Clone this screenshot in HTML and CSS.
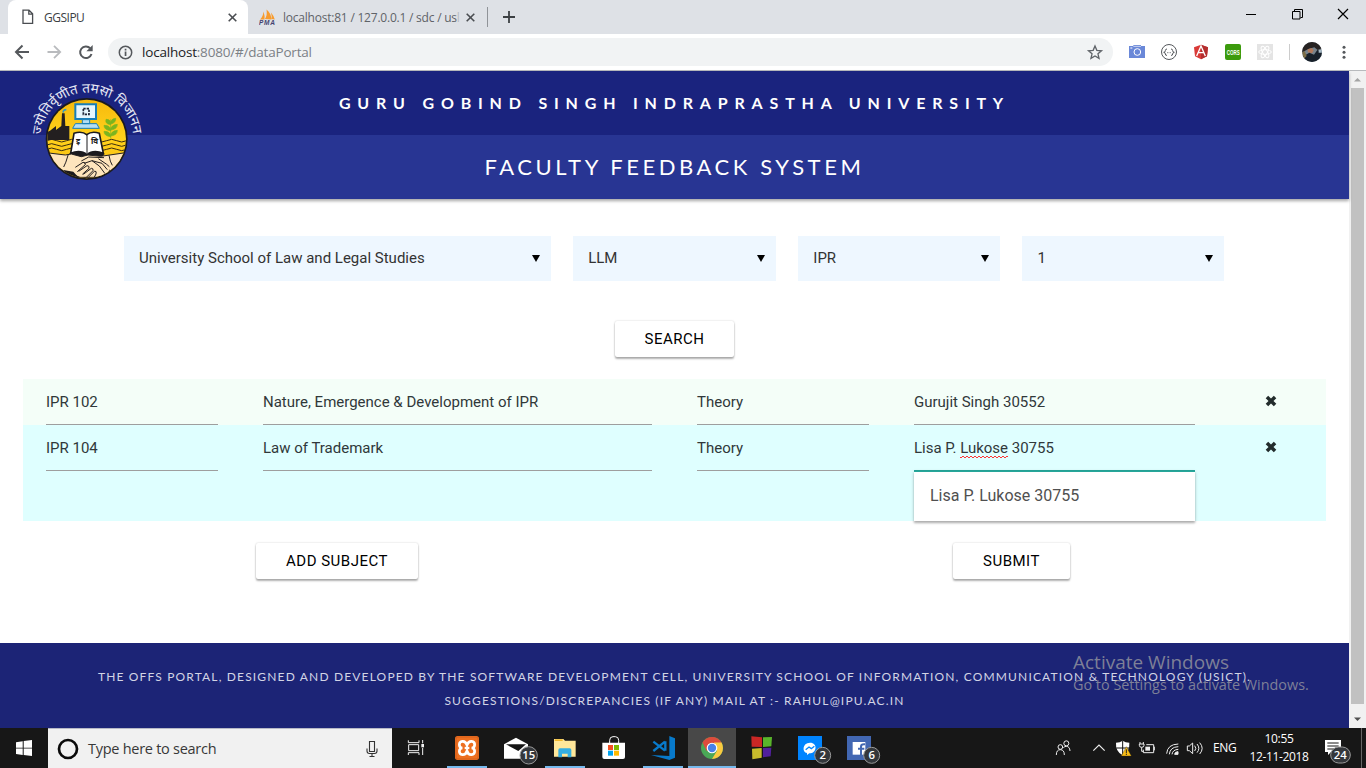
FILE: index.html
```html
<!DOCTYPE html>
<html lang="en">
<head>
<meta charset="utf-8">
<title>GGSIPU</title>
<link rel="stylesheet" href="styles.css">
</head>
<body>
<div class="tabs">
  <div class="tab active">
    <svg class="doc" width="12" height="16" viewBox="0 0 12 16" fill="none" stroke="#4a4d51" stroke-width="1.3"><path d="M1 1.2h6l3.6 3.6v9.6H1zM6.8 1.2v3.9h3.8"/></svg>
    <span class="tab-title t1">GGSIPU</span>
    <svg class="close" width="9" height="9" viewBox="0 0 9 9" stroke="#4a4d51" stroke-width="1.6"><path d="M.7.7l7.6 7.6M8.3.7L.7 8.3"/></svg>
  </div>
  <div class="tab second">
    <svg width="17" height="17" viewBox="0 0 17 17"><path d="M1 10.5Q4 8 4.500 2.500Q6 7 5.500 10.500zM6 10Q8.500 6 7.500 .5Q12 4 12.500 10.500zM12.500 10Q13 7 12 3.500Q15 7 15.800 10.500z" fill="#f89c2e"/><text x="0" y="16.400" class="pma" textLength="16">PMA</text></svg>
    <span class="tab-title t2">localhost:81 / 127.0.0.1 / sdc / us</span><span class="tab-title fade">l</span>
    <svg class="close" width="9" height="9" viewBox="0 0 9 9" stroke="#4a4d51" stroke-width="1.6"><path d="M.7.7l7.600 7.600M8.300.7L.7 8.300"/></svg>
  </div>
  <i class="tab-sep"></i>
  <svg class="plus" width="12" height="12" viewBox="0 0 12 12" stroke="#3c4043" stroke-width="1.800"><path d="M6 0v12M0 6h12"/></svg>
  <div class="winctl">
    <svg width="46" height="34" viewBox="0 0 46 34" stroke="#000" fill="none"><path d="M18 14.500h10"/></svg>
    <svg width="46" height="34" viewBox="0 0 46 34" stroke="#000" fill="none"><path d="M18.500 11.500h7.500v7.500h-7.500zM20.500 11v-1.500h8v8H26.500"/></svg>
    <svg width="46" height="34" viewBox="0 0 46 34" stroke="#000" stroke-width="1.200" fill="none"><path d="M18 9l10 10M28 9L18 19"/></svg>
  </div>
</div>
<div class="toolbar">
  <svg width="32" height="36" viewBox="0 0 32 36" fill="none" stroke="#55585c" stroke-width="2"><path d="M23 18H10.500M16.500 11.500L10 18l6.500 6.500"/></svg>
  <svg width="32" height="36" viewBox="0 0 32 36" fill="none" stroke="#b9bbbe" stroke-width="1.800"><path d="M9.500 18h12M16 11.800l6.200 6.200-6.200 6.200"/></svg>
  <svg width="32" height="36" viewBox="0 0 32 36" fill="none" stroke="#55585c" stroke-width="2"><path d="M20.200 14.300A5.800 5.800 0 1 0 21.500 20"/><path d="M22.700 11v6.300h-6.300z" fill="#55585c" stroke="none"/></svg>
  <div class="omni">
    <svg width="15" height="15" viewBox="0 0 15 15"><circle cx="7.500" cy="7.500" r="6.200" fill="none" stroke="#55585c" stroke-width="1.500"/><path d="M6.700 6.500h1.700v4.500H6.700zM6.700 3.700h1.700v1.700H6.700z" fill="#55585c"/></svg>
    <span class="url"><b>localhost</b>:8080/#/dataPortal</span>
    <svg class="star" width="32" height="28" viewBox="27 114 96 84"><path d="M75 138l5.500 13 14 1.200-10.600 9.200 3.200 13.600L75 167.800 62.900 175l3.200-13.600-10.600-9.200 14-1.200z" fill="none" stroke="#5f6368" stroke-width="4"/></svg>
  </div>
  <svg width="32" height="36" viewBox="153 102 96 108"><path d="M177 138h13v-3h23v3h12v36h-48z" fill="#6a88d8"/><circle cx="202" cy="156" r="10" fill="none" stroke="#fff" stroke-width="3"/><path d="M181 144h6" stroke="#fff" stroke-width="3"/><path d="M190 139h23" stroke="#fff" stroke-width="2"/></svg>
  <svg width="32" height="36" viewBox="249 102 96 108" fill="none" stroke="#55585c"><circle cx="297" cy="156" r="22.500" stroke-width="3"/><path d="M291 147q-5 0-5 5t-5 5q5 0 5 5t5 4M303 147q5 0 5 5t5 5q-5 0-5 5t-5 4" stroke-width="3"/><path d="M292 158h10" stroke-width="3" stroke-dasharray="2 2"/></svg>
  <svg width="32" height="36" viewBox="345 102 96 108"><path d="M393 134l21 8-3 27-18 9-18-9-3-27z" fill="#d93a37"/><path d="M393 134l21 8-3 27-18 9z" fill="#b32e2e"/><path d="M380 168l13-30 13 30M385 158h16" fill="none" stroke="#fff" stroke-width="4"/></svg>
  <svg width="32" height="36" viewBox="441 102 96 108"><rect x="465" y="132" width="48" height="48" rx="6" fill="#3c9b0d"/><text x="470" y="164" class="cors" textLength="39" lengthAdjust="spacingAndGlyphs">CORS</text></svg>
  <svg width="32" height="36" viewBox="537 102 96 108"><path fill="#e4e4e4" d="M561 132h48v48h-48z"/><g fill="none" stroke="#fff" stroke-width="3"><ellipse cx="585" cy="156" rx="19" ry="7"/><ellipse cx="585" cy="156" rx="19" ry="7" transform="rotate(60 585 156)"/><ellipse cx="585" cy="156" rx="19" ry="7" transform="rotate(120 585 156)"/></g></svg>
  <i class="tool-sep"></i>
  <svg class="avatar" width="32" height="36" viewBox="678 102 96 108"><defs><clipPath id="av"><circle cx="726" cy="156" r="30"/></clipPath></defs><g clip-path="url(#av)"><path fill="#77838c" d="M690 120h72v72h-72z"/><path fill="#272322" d="M705 125h42l8 20-12 5-10-8-18 5-18 10-3-18z"/><path fill="#b27a5c" d="M713 148l12-4 6 7-5 9-12-3z"/><path fill="#17202a" d="M698 170l20-12 14 6 10-14 16 4v36h-52z"/><path fill="#7b6c46" d="M696 158l8-5 6 15-8 8z"/><path fill="#a6b8c4" d="M746 150h12v8h-12z"/></g></svg>
  <svg width="32" height="36" viewBox="775 102 96 108" fill="#55585c"><circle cx="823" cy="142" r="4.500"/><circle cx="823" cy="157" r="4.500"/><circle cx="823" cy="172" r="4.500"/></svg>
</div>
<div class="view">
  <div class="site">
    <header class="head">
      <div class="uni"><span>GURU GOBIND SINGH INDRAPRASTHA UNIVERSITY</span></div>
      <div class="sys"><span>FACULTY FEEDBACK SYSTEM</span></div>
      <svg class="emblem" width="140" height="130" viewBox="0 0 420 390">
        <defs>
          <linearGradient id="sun" x1="0" y1="0" x2="0" y2="1"><stop offset="0" stop-color="#f7b90c"/><stop offset=".5" stop-color="#ffd21c"/><stop offset="1" stop-color="#f5b50c"/></linearGradient>
          <clipPath id="disc"><circle cx="200" cy="201" r="118"/></clipPath>
          <path id="arc" d="M64 188A138 138 0 0 1 339 188V290"/>
        </defs>
        <text class="motto"><textPath href="#arc" textLength="408" lengthAdjust="spacingAndGlyphs">ज्योतिर्वृणीत तमसो विजानन</textPath></text>
        <circle cx="200" cy="201" r="123" fill="#1b1a1e"/>
        <g clip-path="url(#disc)">
          <path fill="url(#sun)" d="M78 78h246v246H78z"/>
          <path d="M80 206q15-8 30 0t30 0 30 0 30 0 30 0 30 0 30 0 30 0M80 219q15-8 30 0t30 0 30 0 30 0 30 0 30 0 30 0 30 0M80 232q15-8 30 0t30 0 30 0 30 0 30 0 30 0 30 0 30 0" fill="none" stroke="#3a2c10" stroke-width="3"/>
          <path fill="#231f20" d="M78 181l12-5 18-14v12l16-12 2-38h8l2 38h12v42H78z"/>
          <path d="M130 122q-2-9 9-9" fill="none" stroke="#3a9bbd" stroke-width="5"/>
          <path d="M272 200v-58M272 158q-18-2-14-16 16 0 14 16zM272 156q0-16 15-17 1 14-15 17zM272 176q-20-2-20-16 20 0 20 16zM272 174q0-15 20-17 0 15-20 17zM272 194q-20-2-20-16 20 0 20 16zM272 192q0-15 20-17 0 15-20 17z" fill="#7bb51f" stroke="#7bb51f" stroke-width="2"/>
          <path d="M166 97h62v44h-62z" fill="#e6f6fd" stroke="#187eb8" stroke-width="6"/>
          <path d="M190 110h17v17h-17z" fill="none" stroke="#202738" stroke-width="5" stroke-dasharray="7 3"/>
          <path d="M187 143h22v12h-22zM166 155h64l8 14h-80z" fill="#b4def4" stroke="#187eb8" stroke-width="3"/>
          <path d="M152 244l10-60q24-8 38 4 16-12 38-4l12 60q-30-12-49 4-20-16-49-4z" fill="#fff" stroke="#1b1a1e" stroke-width="5"/>
          <path d="M148 244q32-12 53 5 20-17 52-5l-5 14h-94z" fill="#1b1a1e"/>
          <path d="M201 188v56" stroke="#1b1a1e" stroke-width="3"/>
          <text x="168" y="216" class="booktext">इ</text><text x="213" y="216" class="booktext">वि</text>
          <path d="M78 242l58 7 18-3 30 8 20-5 38 4 82-12v18l-45 41-35 16H180l-45-17-58-32z" fill="#fee5bd" stroke="#231f20" stroke-width="3"/>
          <path d="M145 247q-8 28-14 38M267 250q3 20 10 30M166 286l23-15q8-1 7 7l-24 21M176 298l25-17q8 0 6 8l-20 18M190 307l24-18q7 0 5 7l-19 19M206 315l18-18q7 0 4 9l-7 13M184 267l22-12 46 2M193 274l23-8 22 16 17 23M216 266l30 8 16 19M235 260l25 17 8 7" fill="none" stroke="#231f20" stroke-width="3"/>
          <path d="M130 294l30 5 20 22h-28zM270 292l-18 23 18-6z" fill="#1b1a1e"/>
        </g>
      </svg>
    </header>
    <div class="selects">
      <div class="select"><span class="school">University School of Law and Legal Studies</span><i></i></div>
      <div class="select"><span>LLM</span><i></i></div>
      <div class="select"><span>IPR</span><i></i></div>
      <div class="select"><span>1</span><i></i></div>
    </div>
    <div class="searchrow"><button class="btn search">SEARCH</button></div>
    <div class="row one">
      <div class="field">IPR 102</div><div class="field">Nature, Emergence &amp; Development of IPR</div><div class="field">Theory</div><div class="field">Gurujit Singh 30552</div>
      <div class="del"><svg width="12" height="12" viewBox="0 0 12 12"><path d="M3.200 .7L6 3.400 8.800 .7 11.300 3.200 8.500 6 11.300 8.800 8.800 11.300 6 8.600 3.200 11.300 .7 8.800 3.500 6 .7 3.200z" fill="#222c2c"/></svg></div>
    </div>
    <div class="row two">
      <div class="field">IPR 104</div><div class="field">Law of Trademark</div><div class="field">Theory</div>
      <div class="auto"><div class="field focus">Lisa P. <span class="misspelt">Lukose</span> 30755</div><div class="menu">Lisa P. Lukose 30755</div></div>
      <div class="del"><svg width="12" height="12" viewBox="0 0 12 12"><path d="M3.200 .7L6 3.400 8.800 .7 11.300 3.200 8.500 6 11.300 8.800 8.800 11.300 6 8.600 3.200 11.300 .7 8.800 3.500 6 .7 3.200z" fill="#222c2c"/></svg></div>
    </div>
    <div class="actions"><button class="btn add">ADD SUBJECT</button><button class="btn submit">SUBMIT</button></div>
    <footer class="foot">
      <span class="f1">THE OFFS PORTAL, DESIGNED AND DEVELOPED BY THE SOFTWARE DEVELOPMENT CELL, UNIVERSITY SCHOOL OF INFORMATION, COMMUNICATION &amp; TECHNOLOGY (USICT).</span>
      <span class="f2">SUGGESTIONS/DISCREPANCIES (IF ANY) MAIL AT :- RAHUL@IPU.AC.IN</span>
    </footer>
  </div>
  <div class="scroll">
    <svg width="17" height="17" viewBox="0 0 17 17"><path d="M5 10.500h7L8.500 7z" fill="#a3a3a3"/></svg>
    <div class="thumb"></div>
    <svg width="17" height="17" viewBox="0 0 17 17"><path d="M5 6.500h7L8.500 10z" fill="#505050"/></svg>
  </div>
  <div class="watermark"><span class="w1">Activate Windows</span><span class="w2">Go to Settings to activate Windows.</span></div>
</div>
<div class="taskbar">
  <svg width="48" height="40" viewBox="0 0 48 40"><path d="M16 14.200l6.700-1v6.500H16zM23.700 13l8.300-1v7.700h-8.300zM16 20.500h6.700V27L16 26zM23.700 20.500H32V28l-8.300-1z" fill="#fff"/></svg>
  <div class="find">
    <svg width="22" height="22" viewBox="0 0 22 22"><circle cx="11" cy="11" r="9" fill="none" stroke="#0a0a0a" stroke-width="2.700"/></svg>
    <span>Type here to search</span>
    <svg class="mic" width="12" height="18" viewBox="0 0 12 18" fill="none" stroke="#333" stroke-width="1.100"><path d="M3.500 1.500h5v10h-5zM1 8.500v2.500q0 2.500 2.500 2.500h5q2.500 0 2.500-2.500V8.500M6 13.500v3M3.500 16.500h5"/></svg>
  </div>
  <svg width="48" height="40" viewBox="6 9 144 120" fill="none" stroke="#f2f2f2" stroke-width="3"><path d="M55 46v7h32v-7M55 90v-7h32v7M56 59h30v18H56zM98 45v10M98 69v21"/><path d="M94 57h8v10h-8z" fill="#f2f2f2" stroke="none"/></svg>
  <div class="apps">
    <svg class="open" width="48" height="40" viewBox="159 9 144 120"><rect x="195" y="33" width="72" height="72" rx="8" fill="#ed6f20"/><rect x="198" y="36" width="66" height="66" rx="6" fill="none" stroke="#c9571a" stroke-width="2"/><path d="M231 60q-4-12-14-11-9 1-9 10t9 10q-9 1-9 10t9 10q10 1 14-11 4 12 14 11 9-1 9-10t-9-10q9-1 9-10t-9-10q-10-1-14 11z" fill="none" stroke="#fff" stroke-width="8"/><path d="M224 69h14" stroke="#fff" stroke-width="7"/></svg>
    <svg width="48" height="40" viewBox="306 9 144 120"><path d="M342 58l36-20 36 20v43h-72z" fill="#fff"/><path d="M348 58h60l-23 20z" fill="#151515"/><g class="badge"><circle cx="416" cy="91" r="26"/><text x="416" y="102">15</text></g></svg>
    <svg class="open" width="48" height="40" viewBox="453 9 144 120"><path d="M492 42h28l5 5h32v48h-65z" fill="#ffe79a"/><path d="M494 43h24v5h-24z" fill="#f1b72b"/><path d="M505 97V75q0-5 5-5h29q5 0 5 5v22h-11V86h-17v11z" fill="#34aee2"/></svg>
    <svg width="48" height="40" viewBox="600 9 144 120"><path d="M637 53h68v43q0 6-6 6h-56q-6 0-6-6z" fill="#fff"/><path d="M659 54V46q0-11 10-11h7q10 0 10 11v8" fill="none" stroke="#fff" stroke-width="3"/><path d="M654 60h15v15h-15z" fill="#f25022"/><path d="M672 60h15v15h-15z" fill="#7fba00"/><path d="M654 77h15v15h-15z" fill="#00a4ef"/><path d="M672 77h15v15h-15z" fill="#ffb900"/></svg>
    <svg class="open" width="48" height="40" viewBox="747 9 144 120"><path d="M838 33l17 7v58l-17 7-55-15 55 3z" fill="#087acb"/><path d="M826 49v28M825 50l-35 28M790 50l35 27" fill="none" stroke="#087acb" stroke-width="7"/></svg>
    <svg class="open current" width="48" height="40" viewBox="894 9 144 120"><circle cx="966" cy="69" r="33" fill="#4aa756"/><path d="M937.500 52.500A33 33 0 0 1 994.500 52.500L966 69l-16 9z" fill="#dc4b3c"/><path d="M994.500 52.500A33 33 0 0 1 966 102l15-25-9-24.500z" fill="#fbc940"/><circle cx="966" cy="69" r="16" fill="#fff"/><circle cx="966" cy="69" r="12.500" fill="#4a80e8"/></svg>
    <svg width="48" height="40" viewBox="1041 9 144 120"><path d="M1084 34l32 3v29l-31-1z" fill="#ca2725"/><path d="M1119 37l27-1-2 28-25 2z" fill="#59b52b"/><path d="M1086 71l29-2v29l-28 5z" fill="#c7bb2c"/><path d="M1119 69l25-1-2 26-23 3z" fill="#51209c"/></svg>
    <svg width="48" height="40" viewBox="1188 9 144 120"><path d="M1224 33h72v72h-72z" fill="#0084ff"/><path d="M1260 53c-24 0-24 30-9 31v6l7-5c23 0 26-32 2-32z" fill="#fff"/><path d="M1247 74l10-8 7 5 9-7" fill="none" stroke="#0084ff" stroke-width="4"/><g class="badge"><circle cx="1298" cy="91" r="24"/><text x="1298" y="102">2</text></g></svg>
    <svg width="48" height="40" viewBox="1335 9 144 120"><path d="M1371 33h72v72h-72z" fill="#4267b2"/><path d="M1388 51h38v38h-38z" fill="#fff"/><path d="M1413 90V65q0-7 9-7h3M1404 71h19" fill="none" stroke="#4267b2" stroke-width="6"/><g class="badge"><circle cx="1445" cy="91" r="24"/><text x="1445" y="102">6</text></g></svg>
  </div>
  <div class="tray">
    <svg width="35" height="40" viewBox="90 264 105 120" fill="none" stroke="#eee" stroke-width="3"><circle cx="121" cy="321" r="7"/><path d="M109 345q0-16 12-16t12 16"/><circle cx="139" cy="310" r="7.500"/><path d="M130 323q4-4 9-4 10 0 11 14"/></svg>
    <svg width="27" height="40" viewBox="195 264 81 120" fill="none" stroke="#eee" stroke-width="3.500"><path d="M220 332l17-17 17 17"/></svg>
    <svg width="22" height="40" viewBox="276 264 66 120"><path d="M288 308q12 0 20-6 8 6 20 6 2 26-20 38-22-12-20-38z" fill="#fff"/><path d="M308 303v43M289 324h38" stroke="#111" stroke-width="3"/><path d="M319 320l15 28h-30z" fill="#f9bd16" stroke="#362b08"/><path d="M319 328v11M319 341v4" stroke="#222" stroke-width="3"/></svg>
    <svg width="26" height="40" viewBox="342 264 78 120" fill="none" stroke="#eee" stroke-width="3"><path d="M379 314h22v24h-31v-9M403 320v11M360 306v6M370 306v6M358 312h14v4q0 6-7 6t-7-6zM365 322v12h6"/><path d="M376 320h14v12h-14z" fill="#eee" stroke="none"/></svg>
    <svg width="22" height="40" viewBox="420 264 66 120" fill="none" stroke="#eee" stroke-width="3"><path d="M440 341q2-28 35-29M448 343q2-22 27-23M456 343q2-14 19-15"/><path d="M464 343q0-8 10-8v8z" fill="#eee"/></svg>
    <svg width="28" height="40" viewBox="486 264 84 120" fill="none" stroke="#eee" stroke-width="3"><path d="M502 318h6l10-9v32l-10-9h-6zM524 317q7 8 0 16M531 312q11 13 0 26M539 308q15 17 0 34"/></svg>
    <span class="lang">ENG</span>
    <div class="clock"><span class="time">10:55</span><span class="date">12-11-2018</span></div>
    <svg width="46" height="40" viewBox="900 264 138 120"><path d="M915 300h48v36h-30l-9 9v-9h-9z" fill="#fff"/><path d="M922 309h34M922 318h34M922 327h20" stroke="#171717" stroke-width="3"/><g class="badge"><rect x="932" y="321" width="59" height="48" rx="24"/><text x="961" y="356">24</text></g><path d="M1024.500 264v120" stroke="#666" stroke-width="3"/></svg>
  </div>
</div>
</body>
</html>
```
FILE: styles.css
```css
* { box-sizing: border-box; }
body { margin: 0; width: 1366px; height: 768px; overflow: hidden; display: flex; flex-direction: column; background: #fff; font-family: Roboto, "Liberation Sans", sans-serif; }
svg { display: block; flex: none; }
.tabs { height: 34px; flex: none; background: #dee1e6; display: flex; align-items: center; padding-left: 8px; font: 12px "Open Sans", sans-serif; color: #3c4043; }
.tab { display: flex; align-items: center; height: 34px; }
.active { width: 240px; background: #fff; border-radius: 8px 8px 0 0; padding: 0 11px 0 14px; }
.tab-title { white-space: nowrap; }
.t1 { margin-left: 10px; letter-spacing: -.5px; }
.close { margin-left: auto; }
.second { width: 239px; padding: 0 12px 0 11px; color: #5f6368; }
.t2 { margin-left: 7px; letter-spacing: -.22px; }
.fade { opacity: .3; }
.pma { font: italic bold 6.500px "Liberation Sans", sans-serif; fill: #43436f; }
.tab-sep { width: 1px; height: 20px; background: #909398; margin-right: 15px; }
.winctl { display: flex; margin-left: auto; }
.toolbar { height: 37px; flex: none; display: flex; align-items: flex-start; padding-left: 6px; border-bottom: 1px solid #b8babd; background: #fff; }
.omni { width: 1005px; height: 28px; margin: 4px 8px 0 6px; border-radius: 14px; background: #f1f3f4; display: flex; align-items: center; padding-left: 10px; }
.url { font: 13.500px "Open Sans", sans-serif; margin-left: 9px; color: #7c8186; letter-spacing: -.2px; }
.url b { font-weight: 400; color: #202124; }
.star { margin-left: auto; margin-right: 2px; }
.cors { font: bold 20px "Liberation Sans", sans-serif; fill: #fff; }
.tool-sep { width: 1px; height: 16px; background: #ccc; margin: 10px 6px 0 8px; }
.view { height: 657px; flex: none; display: flex; position: relative; }
.site { width: 1349px; display: flex; flex-direction: column; }
.head { position: relative; height: 128px; flex: none; color: #fff; font-family: Lato, sans-serif; text-align: center; box-shadow: 0 2px 3px rgba(0,0,0,.35); }
.uni { height: 64px; background: #1a237e; line-height: 64px; font-size: 16px; font-weight: 700; letter-spacing: 6.820px; }
.sys { height: 64px; background: #283593; line-height: 63px; font-size: 22px; letter-spacing: 3.550px; }
.emblem { position: absolute; left: 20px; top: 1px; overflow: visible; }
.motto { font: 40px "Noto Sans Devanagari", "Noto Sans", sans-serif; fill: #e8e9f5; }
.booktext { font: bold 24px "Noto Sans Devanagari", "Noto Sans", sans-serif; fill: #202020; }
.selects { display: grid; grid-template-columns: 427px 203px 202px 202px; column-gap: 22.160px; padding: 37px 0 0 124px; }
.select { height: 45px; background: #eef7ff; display: flex; align-items: center; justify-content: space-between; padding: 0 11px 2px 15px; font-size: 15px; color: #333; }
.select i { border: 4px solid transparent; border-top: 7px solid #000; border-bottom: 0; margin-top: 1px; }
.searchrow { display: flex; justify-content: center; padding: 40px 0 22px; }
.btn { height: 36px; border: 0; border-radius: 2px; background: #fff; color: #000; font: 15px Roboto, sans-serif; letter-spacing: .5px; padding: 0; box-shadow: 0 2px 2px rgba(0,0,0,.3), 0 0 2px rgba(0,0,0,.2); }
.search { width: 119px; }
.row { margin: 0 23px; padding-left: 23px; display: grid; grid-template-columns: 172px 389px 172px 281px 80px; column-gap: 45px; font-size: 15px; color: #30383a; align-items: start; }
.one { height: 46px; background: #f4fef8; }
.two { height: 96px; background: #dfffff; }
.field { height: 46px; line-height: 46px; border-bottom: 1px solid #9e9e9e; white-space: pre; }
.focus { border-bottom-color: #26a69a; }
.misspelt { padding-bottom: 1px; background: repeating-linear-gradient(90deg, #f33 0 2px, transparent 2px 4px) 0 100% / 100% 1px no-repeat, repeating-linear-gradient(90deg, transparent 0 2px, #f33 2px 4px) 0 calc(100% - 1px) / 100% 1px no-repeat; }
.menu { height: 50px; border-top: 1px solid #26a69a; background: #fff; padding-left: 16px; font-size: 16px; line-height: 48px; color: #505050; box-shadow: 0 2px 2px rgba(0,0,0,.25), 0 1px 4px rgba(0,0,0,.15); }
.del { padding: 16px 0 0 25px; }
.actions { display: flex; padding: 22px 279px 0 256px; justify-content: space-between; }
.add { width: 162px; }
.submit { width: 117px; }
.foot { margin-top: auto; height: 85px; background: #1c2476; display: flex; flex-direction: column; align-items: center; padding-top: 22px; font: 12px/24px Lato, sans-serif; letter-spacing: 1.160px; color: #d2d4e5; white-space: nowrap; }
.scroll { width: 17px; background: #f1f1f1; display: flex; flex-direction: column; justify-content: space-between; }
.thumb { width: 13px; margin: 0 0 7px 2px; background: #c1c1c1; flex: 1; }
.watermark { position: absolute; left: 1073px; top: 578px; display: flex; flex-direction: column; color: rgba(165,165,165,.72); font-family: "Open Sans", sans-serif; white-space: nowrap; }
.w1 { font-size: 19px; line-height: 27px; }
.w2 { font-size: 14.400px; line-height: 18px; }
.taskbar { height: 40px; flex: none; background: #171717; display: flex; color: #fff; font-family: "Open Sans", sans-serif; }
.find { width: 344px; background: #f1f1f1; border-top: 1px solid #b7b9c6; display: flex; align-items: center; padding: 0 14px 0 9px; color: #383838; font-size: 14.500px; letter-spacing: -.27px; }
.find span { margin-left: 9px; }
.mic { margin-left: auto; }
.apps { display: flex; gap: 1px; padding-left: 3px; }
.open { background: linear-gradient(#76b9ed, #76b9ed) 50% 100% / 40px 2px no-repeat; }
.current { background: linear-gradient(#76b9ed, #76b9ed) 50% 100% / 48px 2px no-repeat #484848; }
.badge circle, .badge rect { fill: #34373b; stroke: #999; stroke-width: 3px; }
.badge text { font: 600 34px "Open Sans", sans-serif; fill: #fff; text-anchor: middle; }
.tray { display: flex; margin-left: auto; font-size: 12px; white-space: nowrap; }
.lang { width: 38px; padding-left: 3px; line-height: 39px; letter-spacing: -.3px; }
.clock { width: 62px; margin-right: 10px; display: flex; flex-direction: column; align-items: center; line-height: 18px; padding-top: 2px; letter-spacing: -.35px; }
```
